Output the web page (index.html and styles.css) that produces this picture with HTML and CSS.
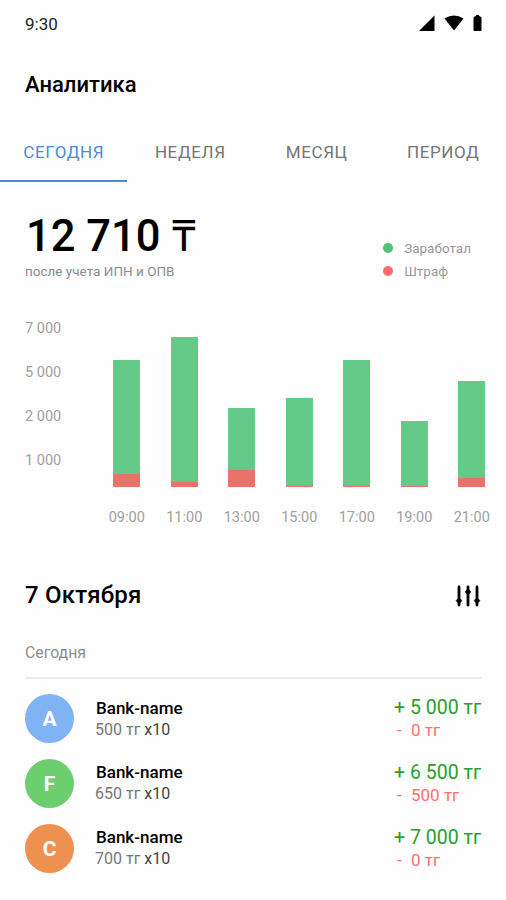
FILE: index.html
```
<!DOCTYPE html>
<html lang="ru">

<head>
    <meta charset="UTF-8">
    <meta name="viewport" content="width=device-width, initial-scale=1.0">
    <title>Аналитика</title>
    <link rel="stylesheet" href="styles.css">
</head>

<body>
    <div class="status-bar">
        <span class="time">9:30</span>
        <svg class="status-icons" width="64" height="18" viewBox="0 0 64 18">
            <path d="M0 17 L15.500 1.500 V17 Z" />
            <path d="M25.500 4.500 Q35 -1.500 44.500 4.500 L35 16.500 Z" />
            <path d="M54.500 4 Q54.500 2.500 56 2.500 L57.500 1 H59.500 L61 2.500 Q62.500 2.500 62.500 4 V16 Q62.500 17 61.500 17 H55.500 Q54.500 17 54.500 16 Z" />
        </svg>
    </div>

    <h1>Аналитика</h1>

    <nav class="tabs">
        <a class="tab active">СЕГОДНЯ</a>
        <a class="tab">НЕДЕЛЯ</a>
        <a class="tab">МЕСЯЦ</a>
        <a class="tab">ПЕРИОД</a>
    </nav>

    <section class="summary">
        <div>
            <div class="total">12 710 <span class="currency">₸</span></div>
            <div class="note">после учета ИПН и ОПВ</div>
        </div>
        <ul class="legend">
            <li><i class="dot earned"></i>Заработал</li>
            <li><i class="dot fine"></i>Штраф</li>
        </ul>
    </section>

    <section class="chart">
        <div class="scale">
            <span>7 000</span>
            <span>5 000</span>
            <span>2 000</span>
            <span>1 000</span>
        </div>
        <div class="bars">
            <div class="col"><div class="bar" style="height: 127px"><div class="bar-fine" style="height: 13.5px"></div></div><span>09:00</span></div>
            <div class="col"><div class="bar" style="height: 150px"><div class="bar-fine" style="height: 5px"></div></div><span>11:00</span></div>
            <div class="col"><div class="bar" style="height: 79px"><div class="bar-fine" style="height: 17px"></div></div><span>13:00</span></div>
            <div class="col"><div class="bar" style="height: 89px"><div class="bar-fine" style="height: 1px"></div></div><span>15:00</span></div>
            <div class="col"><div class="bar" style="height: 127px"><div class="bar-fine" style="height: 1px"></div></div><span>17:00</span></div>
            <div class="col"><div class="bar" style="height: 66px"><div class="bar-fine" style="height: 1px"></div></div><span>19:00</span></div>
            <div class="col"><div class="bar" style="height: 106px"><div class="bar-fine" style="height: 9px"></div></div><span>21:00</span></div>
        </div>
    </section>

    <section class="history">
        <div class="history-header">
            <h2>7 Октября</h2>
            <svg class="filter" width="26" height="22" viewBox="0 0 26 22">
                <path d="M4 2 V20 M13 2 V20 M22 2 V20" stroke="#000" stroke-width="2.800" stroke-linecap="round" />
                <path d="M4 13 L7 15.500 L4 19 L1 15.500 Z M13 3.500 L16 7 L13 9.500 L10 7 Z M22 13 L25 15.500 L22 19 L19 15.500 Z" stroke="#000" stroke-width="0.500" />
            </svg>
        </div>
        <div class="day">Сегодня</div>

        <div class="item">
            <div class="avatar blue">A</div>
            <div class="info">
                <div class="name">Bank-name</div>
                <div class="details">500 тг <b>x10</b></div>
            </div>
            <div class="money">
                <div class="plus"><span>+</span>5 000 тг</div>
                <div class="minus"><span>-</span>0 тг</div>
            </div>
        </div>
        <div class="item">
            <div class="avatar green">F</div>
            <div class="info">
                <div class="name">Bank-name</div>
                <div class="details">650 тг <b>x10</b></div>
            </div>
            <div class="money">
                <div class="plus"><span>+</span>6 500 тг</div>
                <div class="minus"><span>-</span>500 тг</div>
            </div>
        </div>
        <div class="item">
            <div class="avatar orange">C</div>
            <div class="info">
                <div class="name">Bank-name</div>
                <div class="details">700 тг <b>x10</b></div>
            </div>
            <div class="money">
                <div class="plus"><span>+</span>7 000 тг</div>
                <div class="minus"><span>-</span>0 тг</div>
            </div>
        </div>
    </section>
</body>

</html>
```
FILE: styles.css
```
* {
    box-sizing: border-box;
}

body {
    margin: 0;
    height: 900px;
    overflow: hidden;
    background-color: #fefefe;
    color: #000;
    font-family: Roboto, sans-serif;
}

.status-bar {
    display: flex;
    justify-content: space-between;
    align-items: center;
    height: 48px;
    padding: 0 23px 0 25px;
}

.time {
    font-size: 17px;
    color: #222;
}

.status-icons {
    margin-bottom: 3px;
}

h1 {
    margin: 21px 25px 0;
    font-size: 22px;
    font-weight: 500;
    line-height: 32px;
}

.tabs {
    display: grid;
    grid-template-columns: repeat(4, 1fr);
    height: 58px;
    margin-top: 23px;
}

.tab {
    padding-left: 1px;
    line-height: 56px;
    text-align: center;
    font-size: 17px;
    letter-spacing: 0.6px;
    color: #757575;
}

.tab.active {
    color: #4b8bd6;
    border-bottom: 2px solid #4b8bd0;
}

.summary {
    display: flex;
    justify-content: space-between;
    padding: 30px 35px 0 25px;
}

.total {
    height: 50px;
    margin-left: 1px;
    line-height: 50px;
    font-size: 43.5px;
    font-weight: 500;
    white-space: nowrap;
}

.currency {
    margin-left: 1px;
    font-weight: 400;
}

.note {
    font-size: 13.5px;
    line-height: 18px;
    color: #8c8c8c;
}

.legend {
    list-style: none;
    margin: 24px 0 0;
    padding: 0;
    font-size: 13.5px;
    color: #999;
}

.legend li {
    display: flex;
    align-items: center;
    height: 23.5px;
}

.dot {
    width: 10px;
    height: 10px;
    margin-right: 11px;
    border-radius: 50%;
}

.earned {
    background-color: #50c277;
}

.fine {
    background-color: #ff6b6e;
}

.chart {
    display: flex;
    padding: 24px 16px 0 25px;
    font-size: 14.5px;
    color: #a0a0a0;
}

.scale {
    display: flex;
    flex-direction: column;
    width: 73px;
}

.scale span {
    height: 44px;
    line-height: 44px;
}

.bars {
    display: flex;
    flex: 1;
    height: 222px;
    margin-right: -11px;
}

.col {
    display: flex;
    flex-direction: column;
    justify-content: flex-end;
    align-items: center;
    width: 57.5px;
}

.col span {
    height: 42px;
    padding-top: 10px;
    line-height: 42px;
}

.bar {
    display: flex;
    align-items: flex-end;
    width: 27px;
    background-color: #64ca87;
}

.bar-fine {
    width: 100%;
    background-color: #e9736a;
}

.history {
    padding: 0 24px 0 25px;
    margin-top: 48px;
}

.history-header {
    display: flex;
    justify-content: space-between;
    align-items: center;
    height: 36px;
}

.filter {
    margin: 2px 1.5px 0 0;
}

h2 {
    margin: 0;
    font-size: 24px;
    font-weight: 500;
    letter-spacing: 0.2px;
}

.day {
    height: 66px;
    padding-top: 25px;
    border-bottom: 2px solid #ebebeb;
    font-size: 15.8px;
    line-height: 30px;
    color: #8f8f8f;
}

.item {
    display: flex;
    align-items: center;
    height: 49px;
    margin-top: 15.8px;
}

.day + .item {
    margin-top: 15px;
}

.avatar {
    width: 49px;
    height: 49px;
    border-radius: 50%;
    color: #fff;
    font-size: 21px;
    font-weight: 700;
    line-height: 51px;
    text-align: center;
}

.blue {
    background-color: #80b3f3;
}

.green {
    background-color: #6dce70;
}

.orange {
    background-color: #ee9150;
}

.info {
    flex: 1;
    margin-left: 21px;
    line-height: 22px;
}

.name {
    margin-left: 1px;
    font-size: 17px;
    font-weight: 500;
}

.details {
    font-size: 16px;
    color: #777;
}

.details b {
    font-weight: 400;
    color: #444;
}

.money {
    width: 88px;
    padding-top: 1px;
    line-height: 23px;
    white-space: nowrap;
}

.money span {
    display: inline-block;
    width: 16px;
}

.plus {
    font-size: 19.5px;
    color: #28a02c;
}

.minus {
    padding-left: 3px;
    font-size: 17px;
    color: #fb6f70;
}

.minus span {
    width: 14px;
}
```
